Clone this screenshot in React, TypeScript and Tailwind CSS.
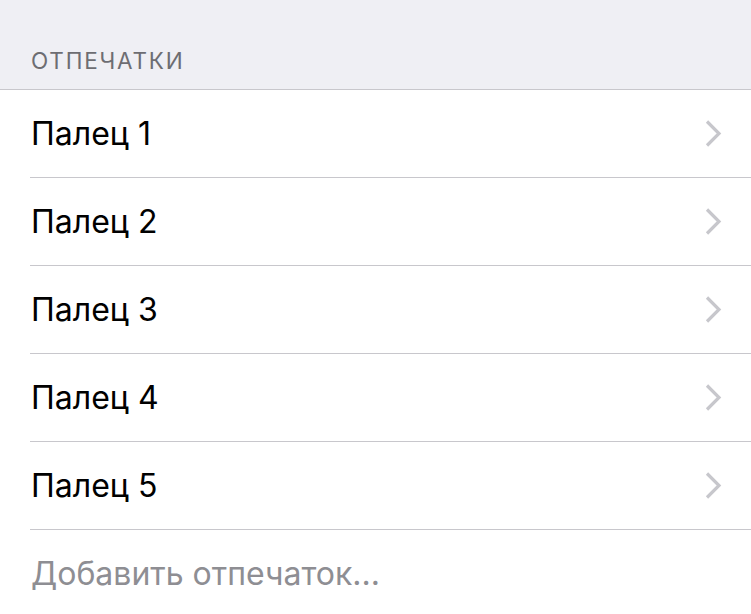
import React from "react";

const Chevron = () => (
  <svg width="17" height="27" viewBox="0 0 17 27" fill="none">
    <path d="M2 1.5 L14 13.5 L2 25.5" stroke="#c7c7cc" strokeWidth="3.2" strokeLinecap="butt" strokeLinejoin="miter" />
  </svg>
);

export default function App() {
  const rows = ["Палец 1", "Палец 2", "Палец 3", "Палец 4", "Палец 5"];
  return (
    <div className="w-[751px] h-[614px] overflow-hidden bg-white" style={{ fontFamily: "Inter, 'Liberation Sans', sans-serif" }}>
      <div className="h-[90px] bg-[#efeff4] border-b border-[#c8c7cc] flex items-end pl-[31px] pb-[17px]">
        <span className="text-[22.5px] leading-none text-[#6d6d72] tracking-[1.8px]">ОТПЕЧАТКИ</span>
      </div>
      <div className="pl-[30px]">
        {rows.map((r) => (
          <div key={r} className="h-[88px] border-b border-[#c8c7cc] flex items-center justify-between pr-[29px]">
            <span className="pl-[1px] text-[32px] text-black leading-none">{r}</span>
            <Chevron />
          </div>
        ))}
        <div className="h-[88px] flex items-center">
          <span className="pl-[1px] text-[32px] text-[#8e8e93] leading-none">Добавить отпечаток...</span>
        </div>
      </div>
    </div>
  );
}
